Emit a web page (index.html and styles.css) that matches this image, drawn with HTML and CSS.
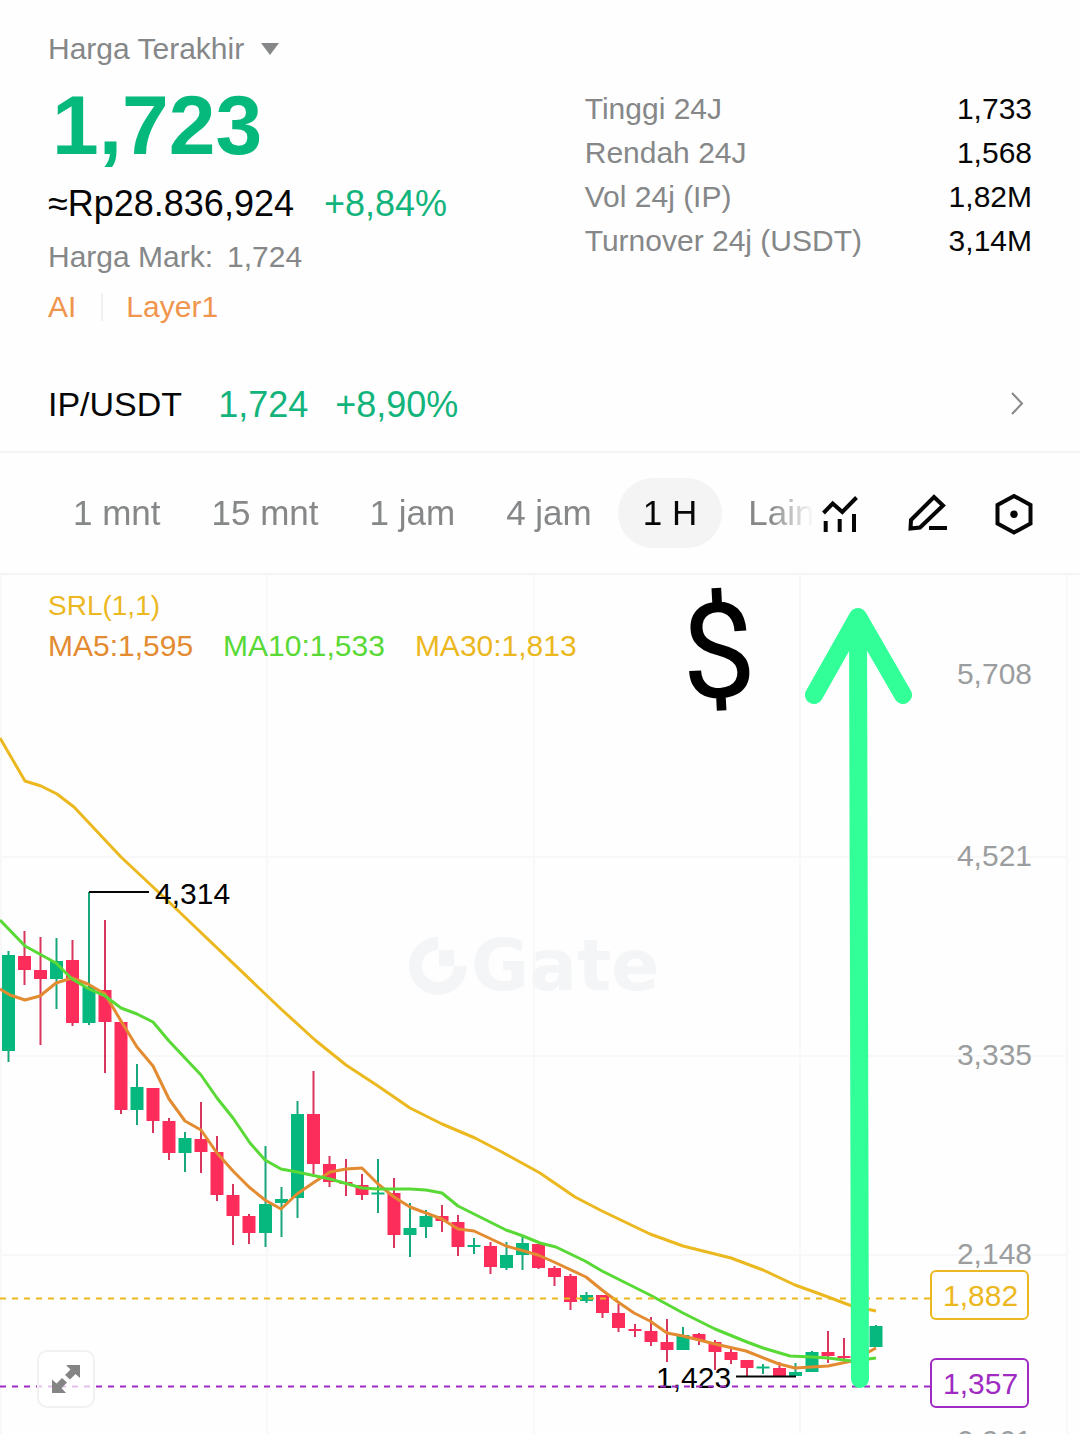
FILE: index.html
```html
<!DOCTYPE html>
<html lang="id">
<head>
<meta charset="utf-8">
<meta name="viewport" content="width=device-width, initial-scale=1">
<title>IP/USDT</title>
<link rel="stylesheet" href="styles.css">
</head>
<body>
<header class="summary">
  <div class="quote">
    <button class="price-type" type="button">Harga Terakhir
      <svg class="caret" viewBox="0 0 20 14" aria-hidden="true"><path d="M1 1H19L10 13Z"/></svg>
    </button>
    <div class="last-price">1,723</div>
    <div class="fiat"><span>≈Rp28.836,924</span><span class="up">+8,84%</span></div>
    <div class="mark"><span>Harga Mark:</span><span>1,724</span></div>
    <nav class="tags"><a href="#ai">AI</a><a href="#layer1">Layer1</a></nav>
  </div>
  <dl class="stats">
    <div><dt>Tinggi 24J</dt><dd>1,733</dd></div>
    <div><dt>Rendah 24J</dt><dd>1,568</dd></div>
    <div><dt>Vol 24j (IP)</dt><dd>1,82M</dd></div>
    <div><dt>Turnover 24j (USDT)</dt><dd>3,14M</dd></div>
  </dl>
</header>

<a class="pair" href="#spot">
  <span class="pair-name">IP/USDT</span>
  <span class="pair-price">1,724</span>
  <span class="pair-change">+8,90%</span>
  <svg class="chevron" viewBox="0 0 14 26" aria-hidden="true"><path d="M2 1L12 11.500L2 22"/></svg>
</a>

<div class="toolbar">
  <div class="intervals">
    <button type="button">1 mnt</button>
    <button type="button">15 mnt</button>
    <button type="button">1 jam</button>
    <button type="button">4 jam</button>
    <button type="button" class="active" aria-pressed="true">1 H</button>
    <button type="button">Lain</button>
  </div>
  <div class="tools">
    <button type="button" aria-label="Indikator">
      <svg viewBox="0 0 40 40"><path d="M3.500 20L12.700 10.500L22.300 19L36.500 4.500M5.700 28V39M19.700 26V39M34 21V39"/></svg>
    </button>
    <button type="button" aria-label="Gambar">
      <svg viewBox="0 0 40 40"><path d="M27 4L36 12.500L13 34.500L3.500 35.500L4 27ZM22 35H40"/></svg>
    </button>
    <button type="button" aria-label="Pengaturan">
      <svg viewBox="0 0 40 40"><path d="M20 3L36.500 12V30.500L20 39.500L3.500 30.500V12Z"/><circle cx="20" cy="21.200" r="3.700"/></svg>
    </button>
  </div>
</div>

<main class="chart">
  <svg class="plot" viewBox="0 575 1080 859" role="img" aria-label="Grafik harga IP/USDT">
    <path class="grid" d="M1 575V1434M267 575V1434M534 575V1434M800 575V1434M1067 575V1434M0 857H1067M0 1056H1067M0 1255H1067"/>

    <!-- watermark -->
    <g class="watermark">
      <path d="M438 937A29 29 0 1 0 467 966H454A16 16 0 1 1 438 950Z"/>
      <path d="M439 950H454V966H439Z"/>
      <text x="471" y="990">Gate</text>
    </g>

    <!-- candles: wicks, then bodies -->
    <path class="wick rise" d="M8.500 951V1062M56.500 938V1009M89 892V1025M137 1064V1125M185 1132V1172M265.500 1146V1247M281.500 1187V1237M297.500 1101V1218M378 1159V1213M410 1203V1257M426 1210V1238M474 1238V1254M506.500 1242V1270M522.500 1235V1270M586.500 1292V1303M683 1327V1350M763 1364V1374M795.500 1363V1376M812 1351V1372M876 1325V1347"/>
    <path class="wick fall" d="M24.500 931V985M40.500 937V1045M72.500 940V1026M105 920V1073M121 1022V1114M153 1088V1133M169 1118V1160M201 1102V1173M217 1136V1201M233 1184V1245M249 1214V1244M313.500 1071V1177M329.500 1156V1187M346 1159V1196M362 1174V1200M394 1178V1248M442 1205V1232M458 1215V1256M490.500 1242V1274M538.500 1244V1269M554.500 1266V1286M570.500 1274V1310M602.500 1295V1318M618.500 1304V1332M635 1324V1337M651 1317V1346M667 1319V1362M699 1333V1345M715 1340V1370M731 1349V1364M747 1360V1376M779.500 1362V1376M828 1331V1363M844 1338V1360"/>
    <path class="body rise" d="M8.500 955V1051M56.500 961V979M89 987V1023M137 1087V1110M185 1138V1153M265.500 1204V1233M281.500 1199V1203M297.500 1114V1198M378 1192.500V1194.500M410 1228V1235M426 1216V1227M474 1245V1247M506.500 1255V1268M522.500 1243V1255M586.500 1295V1301M683 1335V1350M763 1366.500V1368.500M795.500 1372V1376M812 1352V1372M876 1326V1347"/>
    <path class="body fall" d="M24.500 956V970M40.500 970V979M72.500 960V1023M105 990V1022M121 1022V1110M153 1088V1121M169 1121V1153M201 1139V1152M217 1152V1195M233 1195V1216M249 1216V1233M313.500 1114V1164M329.500 1164V1182M346 1182V1184M362 1185V1195M394 1193V1235M442 1216V1221M458 1222V1247M490.500 1246V1267M538.500 1244V1268M554.500 1268V1277M570.500 1276V1302M602.500 1295V1313M618.500 1313V1328M635 1329V1331M651 1331V1342M667 1342V1350M699 1334V1340M715 1342V1352M731 1352V1360M747 1360V1368M779.500 1368V1376M828 1352V1356M844 1356V1358"/>

    <!-- moving averages -->
    <polyline class="ma ma30" points="0,738 25,781 41,786 57,794 74,807 121,857 169,902 260,989 281,1009 315,1040 346,1065 378,1086 410,1108 442,1124 475,1138 500,1151 540,1173 575,1197 602,1211 650,1234 683,1246 715,1254 731,1258 763,1270 795,1285 820,1294 852,1306 876,1311"/>
    <polyline class="ma ma5" points="0,989 10,995 25,1000 40,996 56,983 72,978 88,984 105,994 121,1021 137,1047 153,1066 169,1099 185,1121 201,1130 217,1153 233,1171 249,1187 265,1200 281,1209 297,1194 313,1183 330,1172 346,1169 362,1168 378,1184 394,1197 410,1207 426,1213 442,1219 458,1229 474,1231 506,1246 538,1255 554,1262 586,1277 602,1290 618,1302 634,1313 650,1321 667,1333 683,1336 715,1344 746,1351 779,1364 795,1368 828,1366 852,1361 876,1348"/>
    <polyline class="ma ma10" points="0,920 25,946 56,963 72,979 89,989 105,996 121,1008 137,1014 153,1022 169,1041 201,1075 217,1098 233,1118 250,1143 265,1160 281,1169 297,1172 330,1179 362,1188 378,1189 410,1189 426,1190 442,1193 458,1206 490,1222 506,1230 523,1236 540,1243 556,1247 585,1261 602,1271 618,1279 650,1295 683,1313 715,1329 747,1342 763,1348 790,1356 812,1357 828,1358 852,1361 876,1358"/>

    <!-- extremes -->
    <path class="leader" d="M89 892H149M736 1376.500H796"/>
    <text class="extreme" x="155" y="904">4,314</text>
    <text class="extreme" x="656" y="1388">1,423</text>

    <!-- price scale -->
    <g class="scale">
      <text x="1032" y="684">5,708</text>
      <text x="1032" y="866">4,521</text>
      <text x="1032" y="1065">3,335</text>
      <text x="1032" y="1264">2,148</text>
      <text x="1032" y="1451">0,961</text>
    </g>

    <g class="level resistance">
      <path d="M0 1298.500H930"/>
      <rect x="931" y="1271" width="97" height="48" rx="5"/>
      <text x="943" y="1306">1,882</text>
    </g>
    <g class="level support">
      <path d="M0 1386.500H930"/>
      <rect x="931" y="1359" width="97" height="48" rx="5"/>
      <text x="943" y="1394">1,357</text>
    </g>

    <!-- drawn notes -->
    <path class="arrow" d="M858 618L860 1379M814 695L858 617L903 695"/>
    <text class="dollar" x="718" y="697" transform="rotate(-3 718 650)">$</text>
  </svg>

  <div class="legend">
    <div class="legend-srl">SRL(1,1)</div>
    <div class="legend-ma">
      <span class="c-ma5">MA5:1,595</span>
      <span class="c-ma10">MA10:1,533</span>
      <span class="c-ma30">MA30:1,813</span>
    </div>
  </div>

  <button class="expand" type="button" aria-label="Layar penuh">
    <svg viewBox="0 0 28 28"><path d="M14 0H28V13L23.500 9L18 14.500L13 10L18.500 4.500ZM0 28V14.500L4.500 18.500L10 13L15 17.500L9.500 23L14 28Z"/></svg>
  </button>
</main>
</body>
</html>
```
FILE: styles.css
```css
* {
  box-sizing: border-box;
}

body {
  margin: 0;
  background: #fefefe;
  color: #060606;
  font-family: "Liberation Sans", Arial, sans-serif;
  font-size: 30px;
  line-height: 40px;
}

button {
  margin: 0;
  padding: 0;
  border: 0;
  background: none;
  color: inherit;
  font: inherit;
  cursor: pointer;
}

a {
  color: inherit;
  text-decoration: none;
}

svg {
  display: block;
}

/* Summary */
.summary {
  display: grid;
  grid-template-columns: 6fr 5fr;
  padding: 29px 48px 31px;
}

.price-type {
  display: flex;
  align-items: center;
  gap: 16px;
  color: #858788;
}

.caret {
  width: 20px;
  height: 14px;
  fill: #858788;
}

.last-price {
  padding-left: 4px;
  color: #05b97d;
  font-size: 84px;
  font-weight: 700;
  line-height: 112px;
}

.fiat {
  display: flex;
  gap: 30px;
  font-size: 36px;
  line-height: 46px;
}

.up {
  color: #12b47c;
}

.mark {
  display: flex;
  gap: 14px;
  margin-top: 10px;
  color: #858788;
}

.tags {
  display: flex;
  margin-top: 10px;
  color: #f0954d;
}

.tags a + a {
  margin-left: 25px;
  padding-left: 25px;
  background: linear-gradient(#f0f0f0, #f0f0f0) left center / 2px 28px no-repeat;
}

.stats {
  margin: 0;
  padding-top: 58px;
  line-height: 44px;
}

.stats div {
  display: flex;
  justify-content: space-between;
}

.stats dt {
  color: #858788;
}

.stats dd {
  margin: 0;
}

/* Spot pair link */
.pair {
  display: flex;
  align-items: center;
  padding: 24px 56px 24px 48px;
  border-bottom: 2px solid #f4f4f4;
  font-size: 34px;
  line-height: 45px;
}

.pair-price,
.pair-change {
  color: #12b47c;
  font-size: 36px;
}

.pair-price {
  margin-left: 36px;
}

.pair-change {
  margin-left: 27px;
}

.chevron {
  width: 14px;
  height: 26px;
  margin-left: auto;
  fill: none;
  stroke: #858788;
  stroke-width: 2;
}

/* Intervals and chart tools */
.toolbar {
  display: flex;
  align-items: center;
  padding: 25px 46px 25px 48px;
  border-bottom: 2px solid #f4f4f4;
}

.intervals {
  display: flex;
  flex: 1;
  gap: 1px;
  min-width: 0;
  margin-right: 6px;
  overflow: hidden;
  color: #858788;
  font-size: 35px;
  line-height: 70px;
  -webkit-mask-image: linear-gradient(to left, transparent, #000 44px);
  mask-image: linear-gradient(to left, transparent, #000 44px);
}

.intervals button {
  flex: none;
  padding: 0 25px;
  border-radius: 35px;
}

.intervals .active {
  background: #f4f4f4;
  color: #060606;
}

.tools {
  display: flex;
  gap: 47px;
}

.tools svg {
  width: 40px;
  height: 40px;
  overflow: visible;
  fill: none;
  stroke: #060606;
  stroke-width: 4;
}

.tools circle {
  fill: #060606;
  stroke: none;
}

/* Chart */
.chart {
  display: grid;
  overflow: hidden;
}

.plot,
.legend,
.expand {
  grid-area: 1 / 1;
}

.plot {
  width: 100%;
  height: auto;
}

.plot text {
  font-size: 30px;
}

.grid {
  stroke: #f8f8f8;
  stroke-width: 2;
}

.watermark {
  fill: #f3f5f6;
}

.plot .watermark text {
  font-family: "DejaVu Sans", sans-serif;
  font-size: 71px;
  font-weight: 700;
}

.wick {
  stroke-width: 2;
}

.body {
  stroke-width: 13;
}

.rise {
  stroke: #06b87d;
}

.fall {
  stroke: #fc2d5b;
}

.wick.rise {
  stroke: #1aa67c;
}

.wick.fall {
  stroke: #d8365f;
}

.ma {
  fill: none;
  stroke-width: 3;
  stroke-linejoin: round;
}

.ma5 {
  stroke: #e38b30;
}

.ma10 {
  stroke: #58d936;
}

.ma30 {
  stroke: #ecb81f;
}

.leader {
  stroke: #060606;
  stroke-width: 2;
}

.scale {
  fill: #9b9d9e;
  text-anchor: end;
}

.level path {
  stroke-width: 2;
  stroke-dasharray: 6 6;
}

.level rect {
  fill: #fefefe;
  stroke-width: 2;
}

.resistance {
  fill: #ecb81f;
  stroke: #ecb81f;
}

.support {
  fill: #a02bc2;
  stroke: #a02bc2;
}

.level text {
  stroke: none;
}

.arrow {
  fill: none;
  stroke: #33ff99;
  stroke-width: 18;
  stroke-linecap: round;
  stroke-linejoin: round;
}

.plot .dollar {
  font-family: Roboto, sans-serif;
  font-size: 132px;
  text-anchor: middle;
}

.legend {
  padding: 11px 48px;
}

.legend-srl {
  color: #ecb81f;
  font-size: 28px;
}

.legend-ma {
  display: flex;
  gap: 30px;
}

.c-ma5 {
  color: #e38b30;
}

.c-ma10 {
  color: #58d936;
}

.c-ma30 {
  color: #ecb81f;
}

.expand {
  align-self: end;
  justify-self: start;
  margin: 0 0 26px 37px;
  padding: 13px;
  border: 2px solid #f0f1f1;
  border-radius: 10px;
  background: rgba(255, 255, 255, 0.7);
}

.expand svg {
  width: 28px;
  height: 28px;
  fill: #848484;
}
```
